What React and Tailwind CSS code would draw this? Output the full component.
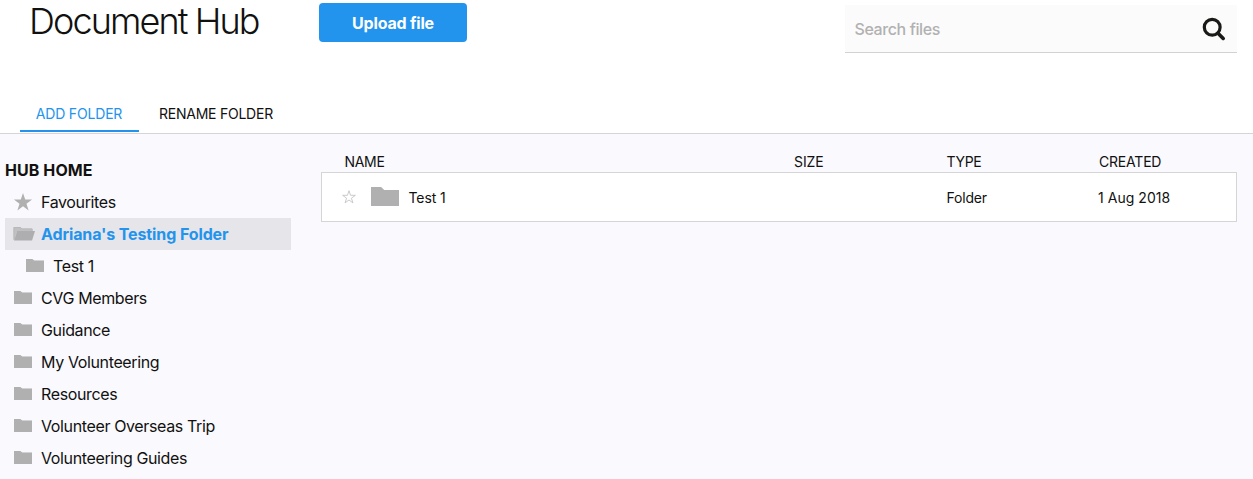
const folders = [
  "CVG Members",
  "Guidance",
  "My Volunteering",
  "Resources",
  "Volunteer Overseas Trip",
  "Volunteering Guides",
];

function FolderIcon({ className, large }) {
  return (
    <svg viewBox="0 0 18 13" preserveAspectRatio="none" className={className}>
      {!large && <path d="M6 1h12v2H6z" fill="#d2d2d5" />}
      <path d="M0 0h6.5l2 2H18v11H0z" fill="#b0b0b0" />
    </svg>
  );
}

function OpenFolderIcon() {
  return (
    <svg viewBox="0 0 22 14" className="-mt-px h-[14px] w-[22px]">
      <path d="M0.500 0h7l1.500 1.500H19.500V5H4L1 13H0.500z" fill="#c0c0c2" />
      <path d="M1 12.500V0.500h6.300l1.500 1.500h10.200V5" fill="none" stroke="#b8b8ba" />
      <path d="M4.200 4H22l-3 9.500H1z" fill="#aeaeb0" />
    </svg>
  );
}

function StarIcon({ className, outline }) {
  return (
    <svg viewBox="0 0 20 20" className={className}>
      <path
        d="M10 1l2.200 6.600h6.900l-5.600 4.100 2.100 6.700L10 14.300l-5.600 4.100 2.100-6.700L0.900 7.600h6.900z"
        fill={outline ? "none" : "#b0b0b0"}
        stroke={outline ? "#c4c4c4" : "none"}
        strokeWidth="1.300"
      />
    </svg>
  );
}

function SearchIcon() {
  return (
    <svg viewBox="0 0 24 24" className="h-6 w-6" fill="none" stroke="#1a1a17">
      <circle cx="10.200" cy="10.200" r="7.900" strokeWidth="3.200" />
      <path d="M16 16.200l5.200 5.200" strokeWidth="3.600" strokeLinecap="round" />
    </svg>
  );
}

function Header() {
  return (
    <header className="flex h-[95px] items-start pr-4 pl-[29px]">
      <h1 className="w-[290px] text-[36px] leading-[42px] font-light tracking-[-1.900px] whitespace-nowrap">
        Document Hub
      </h1>
      <button className="mt-[3px] h-[39px] w-[148px] rounded bg-[#2394ed] text-base font-bold tracking-[-0.200px] text-white">
        Upload file
      </button>
      <div className="mt-[5px] ml-auto flex h-12 w-[392px] items-center justify-between border-b border-[#d2d2d2] bg-[#fbfbfb] pr-[11px] pl-[9.500px]">
        <span className="text-base font-medium tracking-[-0.400px] text-[#b1b1b1]">Search files</span>
        <SearchIcon />
      </div>
    </header>
  );
}

function Tabs() {
  return (
    <nav className="flex h-[39px] items-start border-b border-[#d4d4da] pl-5 text-sm leading-[38px]">
      <button className="h-[37px] w-[119px] border-b-2 border-[#2394ed] pr-px tracking-[-0.180px] text-[#2394ed]">
        ADD FOLDER
      </button>
      <button className="ml-5 tracking-[-0.240px]">RENAME FOLDER</button>
    </nav>
  );
}

function Sidebar() {
  return (
    <aside className="ml-[5px] w-[286px] pt-5 text-base leading-8 tracking-[-0.370px]">
      <h2 className="h-8 font-bold tracking-[0.080px]">HUB HOME</h2>
      <ul>
        <li className="flex h-8 items-center pl-2">
          <StarIcon className="mr-2 h-5 w-5" />
          <span>Favourites</span>
        </li>
        <li className="flex h-8 items-center bg-[#e6e5ea] pl-2">
          <OpenFolderIcon />
          <span className="ml-[6px] font-bold tracking-[-0.110px] text-[#2394ed]">Adriana's Testing Folder</span>
        </li>
        <li className="flex h-8 items-center pl-[21px]">
          <FolderIcon className="-mt-px mr-[9px] h-[13px] w-[18px]" />
          <span>Test 1</span>
        </li>
        {folders.map((name) => (
          <li key={name} className="flex h-8 items-center pl-[9px]">
            <FolderIcon className="-mt-px mr-[9px] h-[13px] w-[18px]" />
            <span>{name}</span>
          </li>
        ))}
      </ul>
    </aside>
  );
}

function FileTable() {
  return (
    <section className="ml-[30px] w-[916px] pt-[18px] text-sm">
      <div className="grid h-5 grid-cols-[473px_153px_152px_1fr] leading-5 tracking-[-0.300px]">
        <span className="pl-[23.500px]">NAME</span>
        <span className="tracking-[-0.100px]">SIZE</span>
        <span className="-ml-[0.500px]">TYPE</span>
        <span className="tracking-[-0.200px]">CREATED</span>
      </div>
      <div className="grid h-[50px] grid-cols-[472px_153px_151px_1fr] items-center border border-[#d5d5d5] bg-white tracking-[-0.100px]">
        <div className="flex items-center pl-5">
          <StarIcon outline className="h-[14px] w-[14px]" />
          <FolderIcon large className="-mt-px ml-[15px] h-[19px] w-7" />
          <span className="ml-[9.500px] pt-[2px]">Test 1</span>
        </div>
        <span />
        <span className="-ml-[0.500px] pt-[2px] tracking-[-0.200px]">Folder</span>
        <span className="pt-[2px] tracking-[0.040px]">1 Aug 2018</span>
      </div>
    </section>
  );
}

export default function App() {
  return (
    <div className="flex h-[479px] w-[1253px] flex-col overflow-hidden bg-white font-['Inter','Liberation_Sans',sans-serif] text-[#111110]">
      <Header />
      <Tabs />
      <main className="flex flex-1 bg-[#faf9fe]">
        <Sidebar />
        <FileTable />
      </main>
    </div>
  );
}
